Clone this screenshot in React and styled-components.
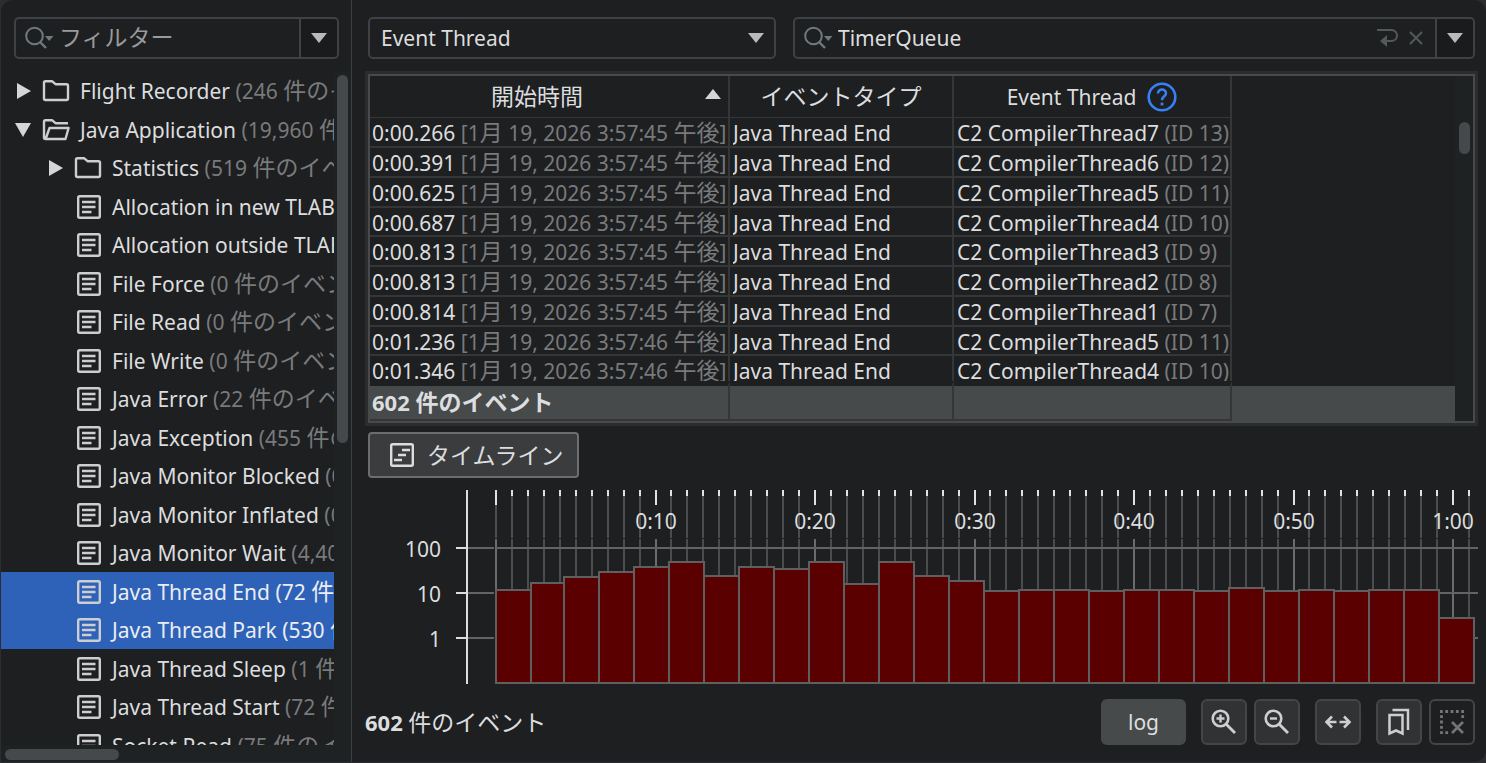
import React, { useState } from "react";
import styled, { createGlobalStyle, css } from "styled-components";

const GlobalStyle = createGlobalStyle`
  body {
    margin: 0;
    background-color: #2b2d30;
    color: #dcdddf;
    font-family: "Noto Sans", "Noto Sans CJK JP", sans-serif;
    font-size: 21px;
  }

  * {
    box-sizing: border-box;
  }

  button,
  input,
  select {
    font: inherit;
    color: inherit;
  }
`;

const Window = styled.div`
  display: flex;
  height: 100vh;
  padding: 0 0 1px 1px;
`;

const Ja = styled.span`
  font-size: 23px;
  line-height: 1;
`;

const Muted = styled.span`
  color: #797a7b;
`;

/* sidebar */

const Sidebar = styled.aside`
  flex: 0 0 351px;
  display: flex;
  flex-direction: column;
  min-width: 0;
  padding-top: 17px;
  border-right: 1px solid #3c3e41;
  border-radius: 12px 0 0 0;
  background-color: #1e1f21;
`;

const Field = styled.div`
  flex: 1;
  display: flex;
  align-items: center;
  min-width: 0;
  height: 42px;
  padding-left: 9px;
  border: 2px solid #404144;
  border-radius: 5px;
`;

const FilterField = styled(Field)`
  flex: none;
  margin: 0 12px 13px 13px;
`;

const FieldInput = styled.input`
  flex: 1;
  min-width: 0;
  height: 100%;
  margin-left: 5px;
  padding: 0;
  border: none;
  outline: none;
  background: none;

  &::placeholder {
    color: #999a9c;
    font-size: 23px;
    opacity: 1;
  }
`;

const ArrowButton = styled.button`
  display: flex;
  align-items: center;
  justify-content: center;
  width: 38px;
  height: 38px;
  padding: 0;
  border: none;
  border-left: 2px solid #404144;
  border-radius: 0 4px 4px 0;
  background-color: #1a1b1d;
`;

const FieldActions = styled.div`
  display: flex;
  align-items: center;
  gap: 8px;
  padding-right: 11px;
`;

const GhostButton = styled.button`
  display: flex;
  padding: 0;
  border: none;
  background: none;
`;

const TreeArea = styled.div`
  flex: 1;
  display: flex;
  min-height: 0;
`;

const Tree = styled.ul`
  flex: 1;
  min-width: 0;
  margin: 0;
  padding: 0;
  overflow: hidden;
  list-style: none;
`;

const TreeRow = styled.li`
  display: flex;
  align-items: center;
  height: 38px;
  padding-left: ${(props) => (props.$level === 0 ? "13px" : "45px")};
  white-space: nowrap;

  &:nth-child(even) {
    height: 39px;
  }

  svg {
    flex: none;
  }

  ${(props) =>
    props.$selected &&
    css`
      background-color: #2e62b8;
      color: #ebedf1;

      ${Muted} {
        color: #ebedf1;
      }
    `}
`;

const Twisty = styled.span`
  flex: none;
  display: flex;
  width: 28px;
`;

const RowLabel = styled.span`
  margin-left: 10px;
`;

const VerticalTrack = styled.div`
  flex: none;
  width: ${(props) => props.$width};
  padding: ${(props) => props.$padding};
  background-color: #1f2223;
`;

const HorizontalTrack = styled.div`
  height: 17px;
  padding: 4px 4px 2px;
  background-color: #1f2223;
`;

const Thumb = styled.div`
  width: ${(props) => props.$width};
  height: ${(props) => props.$height};
  border-radius: 6px;
  background-color: #46494c;
`;

/* main area */

const Main = styled.main`
  flex: 1;
  display: flex;
  flex-direction: column;
  min-width: 0;
  padding: 17px 8px 0 13px;
  border-radius: 0 12px 12px 0;
  background-color: #1e1f21;
`;

const SearchBar = styled.div`
  display: flex;
  gap: 17px;
  margin: 0 3px 12px 3px;
`;

const SelectBox = styled.div`
  flex: 0 0 408px;
  display: grid;
  align-items: center;

  > * {
    grid-area: 1 / 1;
  }

  > svg {
    justify-self: end;
    margin-right: 12px;
    pointer-events: none;
  }
`;

const Select = styled.select`
  height: 42px;
  padding: 0 11px;
  border: 2px solid #404144;
  border-radius: 5px;
  background: #1e1f21;
  appearance: none;
`;

const TableFrame = styled.div`
  padding: 3px;
  background-color: #2a2c2e;
`;

const TableArea = styled.div`
  display: flex;
  border: 2px solid #484a4c;
  background-color: #1e1f21;
`;

const Table = styled.table`
  flex: 1;
  table-layout: fixed;
  border-collapse: separate;
  border-spacing: 0;
  white-space: nowrap;
`;

const HeadCell = styled.th`
  height: 42px;
  padding: 0;
  border: solid #343638;
  border-width: 0 2px 1px 0;
  font-weight: 400;
`;

const HeadContent = styled.div`
  display: flex;
  align-items: center;
  justify-content: center;
  gap: 11px;
`;

const HeadTitle = styled.span`
  flex: ${(props) => (props.$grow ? 1 : "none")};
  padding-left: ${(props) => (props.$grow ? "10px" : 0)};
`;

const SortMark = styled.span`
  display: flex;
  align-self: flex-start;
  padding: 6px 7px 0 0;
`;

const CellContent = styled.div`
  height: 28px;
  line-height: 30px;
  overflow: hidden;
`;

const Cell = styled.td`
  padding: 0 0 0 3px;
  border: solid #343638;
  border-width: 0 2px 2px 0;

  &:first-child {
    padding-left: 2px;
  }
`;

const BodyRow = styled.tr`
  &:nth-child(4n) ${CellContent} {
    height: 27px;
  }

  &:last-child ${CellContent} {
    height: 25px;
  }

  &:last-child ${Cell} {
    border-bottom: none;
  }
`;

const FootCell = styled.td`
  height: 40px;
  padding: 0 0 2px 2px;
  border: solid #343638;
  border-width: 5px 2px 2px 0;
  border-top-color: #1e1f21;
  background-color: #464a4a;
  font-size: 22px;
  font-weight: 700;
  line-height: 30px;
`;

const FillerCell = styled.td`
  padding: 0;
  border-top: ${(props) => (props.$foot ? "5px solid #1e1f21" : "none")};
  background-color: ${(props) => (props.$foot ? "#464a4a" : "transparent")};
`;

const TimelineButton = styled.button`
  align-self: flex-start;
  display: flex;
  align-items: center;
  gap: 13px;
  height: 46px;
  margin: 6px 0 12px 3px;
  padding: 0 14px 0 20px;
  border: 2px solid #6b6d6f;
  border-radius: 4px;
  background-color: #3a3c3e;
`;

const Chart = styled.svg`
  display: block;
  width: 100%;
  height: auto;
`;

const Footer = styled.footer`
  display: flex;
  align-items: center;
  margin: 14px 3px 0 0;
`;

const Total = styled.span`
  flex: 1;

  b {
    font-size: 22px;
  }
`;

const ToolButton = styled.button`
  display: flex;
  align-items: center;
  justify-content: center;
  width: ${(props) => (props.$wide ? "85px" : "46px")};
  height: 46px;
  margin-left: ${(props) => (props.$joined ? "7px" : "15px")};
  padding: 0;
  border: 2px solid ${(props) => (props.$wide ? "#464a4a" : "#434547")};
  border-radius: 6px;
  background-color: ${(props) =>
    props.$wide ? "#464a4a" : props.disabled ? "#1e1f21" : "#303234"};
`;

/* icons */

const DownArrow = () => (
  <svg width="16" height="10" viewBox="0 0 16 10">
    <path d="M0 0H16L8 10Z" fill="#b9babc" />
  </svg>
);

const SearchIcon = () => (
  <svg width="29" height="24" viewBox="0 0 29 24" fill="none">
    <circle cx="9.5" cy="10" r="8.3" stroke="#6e7a80" strokeWidth="2" />
    <path d="M15 16L21 22" stroke="#6e7a80" strokeWidth="2.4" />
    <path d="M20 10H28.5L24.2 15Z" fill="#6e7a80" />
  </svg>
);

const FolderIcon = () => (
  <svg width="28" height="24" viewBox="0 0 28 24" fill="none">
    <path
      d="M3.5 2.2H10L13.5 5.2H24.500Q26 5.200 26 6.700V19.500Q26 21 24.500 21H3.500Q2 21 2 19.500V3.700Q2 2.200 3.500 2.200Z"
      stroke="#cdcecf"
      strokeWidth="2.4"
      strokeLinejoin="round"
    />
  </svg>
);

const OpenFolderIcon = () => (
  <svg width="28" height="24" viewBox="0 0 28 24" fill="none">
    <path
      d="M26 5.2H13.500L10 2.200H3.500Q2 2.200 2 3.700V19.500Q2 21 3.500 21H23.500L26.600 10H7.500L4 20"
      stroke="#cdcecf"
      strokeWidth="2.4"
      strokeLinejoin="round"
    />
  </svg>
);

const EventIcon = () => (
  <svg width="28" height="24" viewBox="-3 0 28 24" fill="none" stroke="#cdcecf">
    <rect x="1.2" y="1.2" width="21.6" height="21.6" rx="1.5" strokeWidth="2.4" />
    <path d="M5 7H18.5M5 12H18.5M5 17H14.5" strokeWidth="2.3" />
  </svg>
);

const TimelineIcon = () => (
  <svg width="24" height="24" viewBox="0 0 24 24" fill="none" stroke="#dcdddf">
    <rect x="1.2" y="1.2" width="21.6" height="21.6" rx="1.5" strokeWidth="2.4" />
    <path d="M12 7H20M8 12H16M4 17H12" strokeWidth="2.3" />
  </svg>
);

const HelpIcon = () => (
  <svg width="30" height="30" viewBox="0 0 30 30" fill="none" stroke="#3880f5">
    <circle cx="15" cy="15" r="13.3" strokeWidth="2.6" />
    <path d="M11 11.5C11 6.2 19 6.3 19 11.3C19 14.2 15 14.5 15 18.3" strokeWidth="2.5" />
    <path d="M15 20.6V23.4" strokeWidth="2.8" />
  </svg>
);

const ReturnIcon = () => (
  <svg width="24" height="22" viewBox="0 0 24 22" fill="none">
    <path d="M1 3H15C23 3 23 14 15 14H9" stroke="#51595b" strokeWidth="2" />
    <path d="M11 8V20L4 14Z" fill="#51595b" />
  </svg>
);

const ClearIcon = () => (
  <svg width="16" height="16" viewBox="0 0 16 16">
    <path d="M2 2L14 14M14 2L2 14" stroke="#51595b" strokeWidth="2" />
  </svg>
);

const ZoomIcon = ({ plus }) => (
  <svg width="26" height="26" viewBox="0 0 26 26" fill="none" stroke="#cdcecf">
    <circle cx="9.5" cy="9.5" r="7.8" strokeWidth="2.6" />
    <path d="M15 15L24 24" strokeWidth="2.8" />
    <path d={plus ? "M5.5 9.5H13.5M9.5 5.5V13.5" : "M6 9.5H13"} strokeWidth="2.4" />
  </svg>
);

const FitIcon = () => (
  <svg width="28" height="16" viewBox="0 0 28 16" fill="none" stroke="#cdcecf" strokeWidth="2.6">
    <path d="M8 2.5L2.500 8L8 13.500M20 2.500L25.500 8L20 13.500M3 8H12.500M15.500 8H25" />
  </svg>
);

const BookmarkIcon = () => (
  <svg width="24" height="28" viewBox="0 0 24 28" fill="none" stroke="#cdcecf" strokeWidth="2.5">
    <path d="M2.5 7H15.5V25.5L9 22.5L2.5 25.5Z" />
    <path d="M5.500 2H21V22" />
  </svg>
);

const DeselectIcon = () => (
  <svg width="26" height="26" viewBox="0 0 26 26" fill="none" stroke="#747577">
    <path
      d="M1 2.500H25M2.500 6.300V25M6.300 23.700H9.100M23.700 6.300V9.100"
      strokeWidth="2.8"
      strokeDasharray="2.8 2.5"
    />
    <path d="M13 13L24 24M24 13L13 24" strokeWidth="2.6" />
  </svg>
);

const Expander = ({ open }) => (
  <svg width="18" height="16" viewBox="0 0 18 16">
    <path d={open ? "M1 1H17L9 15Z" : "M3 0V16L17 8Z"} fill="#d5d6d7" />
  </svg>
);

/* data */

const treeItems = [
  { name: "Flight Recorder", count: "246", level: 0, folder: true },
  { name: "Java Application", count: "19,960", level: 0, folder: true, open: true },
  { name: "Statistics", count: "519", level: 1, folder: true },
  { name: "Allocation in new TLAB", count: "6,120", level: 1 },
  { name: "Allocation outside TLAB", count: "1,043", level: 1 },
  { name: "File Force", count: "0", level: 1 },
  { name: "File Read", count: "0", level: 1 },
  { name: "File Write", count: "0", level: 1 },
  { name: "Java Error", count: "22", level: 1 },
  { name: "Java Exception", count: "455", level: 1 },
  { name: "Java Monitor Blocked", count: "0", level: 1 },
  { name: "Java Monitor Inflated", count: "0", level: 1 },
  { name: "Java Monitor Wait", count: "4,401", level: 1 },
  { name: "Java Thread End", count: "72", level: 1, selected: true },
  { name: "Java Thread Park", count: "530", level: 1, selected: true },
  { name: "Java Thread Sleep", count: "1", level: 1 },
  { name: "Java Thread Start", count: "72", level: 1 },
  { name: "Socket Read", count: "75", level: 1 },
];

const events = [
  { start: "0:00.266", time: "3:57:45", thread: "C2 CompilerThread7", id: 13 },
  { start: "0:00.391", time: "3:57:45", thread: "C2 CompilerThread6", id: 12 },
  { start: "0:00.625", time: "3:57:45", thread: "C2 CompilerThread5", id: 11 },
  { start: "0:00.687", time: "3:57:45", thread: "C2 CompilerThread4", id: 10 },
  { start: "0:00.813", time: "3:57:45", thread: "C2 CompilerThread3", id: 9 },
  { start: "0:00.813", time: "3:57:45", thread: "C2 CompilerThread2", id: 8 },
  { start: "0:00.814", time: "3:57:45", thread: "C2 CompilerThread1", id: 7 },
  { start: "0:01.236", time: "3:57:46", thread: "C2 CompilerThread5", id: 11 },
  { start: "0:01.346", time: "3:57:46", thread: "C2 CompilerThread4", id: 10 },
];

const barHeights = [
  94, 101, 107, 112, 117, 122, 108, 117, 115, 122, 100, 122, 108, 103, 93, 94,
  94, 93, 94, 94, 93, 96, 93, 94, 93, 94, 94, 66,
];

const timeLabels = ["", "0:10", "0:20", "0:30", "0:40", "0:50", "1:00"];

const levels = [
  { label: "100", y: 58 },
  { label: "10", y: 103 },
  { label: "1", y: 148 },
];

const chartLeft = 130;
// the second bar is two units narrower than the others
const barX = (i) => chartLeft + i * 35 - (i > 1 ? 2 : 0);
const tickX = (i) => Math.round(chartLeft + i * 15.95);

const EventChart = () => (
  <Chart viewBox="-1 0 1113 195" role="img" aria-label="タイムライン">
    {Array.from({ length: 62 }, (_, i) => {
      const major = i % 10 === 0;
      const x = tickX(i);
      return (
        <g key={i}>
          {(!major || i === 0) && <path d={`M${x} 6V48`} stroke="#4b4c4e" strokeWidth="2" />}
          <path d={`M${x} 49V194`} stroke={major ? "#6a6b6c" : "#4b4c4e"} strokeWidth="2" />
          <path d={`M${x} 0V${major ? 15 : 6}`} stroke="#e0e1e2" strokeWidth="2" />
        </g>
      );
    })}
    {levels.map(({ label, y }) => (
      <g key={label}>
        <path d={`M102 ${y}H128M130 ${y}H1113`} stroke="#626364" strokeWidth="2" />
        <path d={`M90 ${y}H101`} stroke="#dcdddf" strokeWidth="2" />
        <text x="75" y={y + 9} textAnchor="end" fontSize="21" fill="#dcdddf">
          {label}
        </text>
      </g>
    ))}
    <path d="M101 0V194" stroke="#dcdddf" strokeWidth="2" />
    {barHeights.map((h, i) => (
      <rect
        key={i}
        x={barX(i)}
        y={194 - h}
        width={barX(i + 1) - barX(i)}
        height={h - 1}
        fill="#5a0000"
        stroke="#5e5f60"
        strokeWidth="2"
      />
    ))}
    {timeLabels.map((label, i) => (
      <text key={i} x={tickX(i * 10)} y="39" textAnchor="middle" fontSize="21" fill="#dcdddf">
        {label}
      </text>
    ))}
  </Chart>
);

const App = () => {
  const [filter, setFilter] = useState("");
  const [search, setSearch] = useState("TimerQueue");

  return (
    <>
      <GlobalStyle />
      <Window>
        <Sidebar>
          <FilterField>
            <SearchIcon />
            <FieldInput
              aria-label="フィルター"
              placeholder="フィルター"
              value={filter}
              onChange={(e) => setFilter(e.target.value)}
            />
            <ArrowButton aria-label="フィルター">
              <DownArrow />
            </ArrowButton>
          </FilterField>
          <TreeArea>
            <Tree>
              {treeItems.map((item) => (
                <TreeRow key={item.name} $level={item.level} $selected={item.selected}>
                  <Twisty>{item.folder && <Expander open={item.open} />}</Twisty>
                  {item.folder ? item.open ? <OpenFolderIcon /> : <FolderIcon /> : <EventIcon />}
                  <RowLabel>
                    {item.name}{" "}
                    <Muted>
                      ({item.count} <Ja>件のイベント</Ja>)
                    </Muted>
                  </RowLabel>
                </TreeRow>
              ))}
            </Tree>
            <VerticalTrack $width="17px" $padding="3px 3px 0">
              <Thumb $width="11px" $height="368px" />
            </VerticalTrack>
          </TreeArea>
          <HorizontalTrack>
            <Thumb $width="114px" $height="11px" />
          </HorizontalTrack>
        </Sidebar>

        <Main>
          <SearchBar>
            <SelectBox>
              <Select aria-label="Event Thread" defaultValue="thread">
                <option value="thread">Event Thread</option>
              </Select>
              <DownArrow />
            </SelectBox>
            <Field>
              <SearchIcon />
              <FieldInput
                aria-label="Event Thread"
                value={search}
                onChange={(e) => setSearch(e.target.value)}
              />
              <FieldActions>
                <GhostButton aria-label="Enter">
                  <ReturnIcon />
                </GhostButton>
                <GhostButton aria-label="Clear" onClick={() => setSearch("")}>
                  <ClearIcon />
                </GhostButton>
              </FieldActions>
              <ArrowButton aria-label="TimerQueue">
                <DownArrow />
              </ArrowButton>
            </Field>
          </SearchBar>

          <TableFrame>
            <TableArea>
              <Table>
                <colgroup>
                  <col style={{ width: 360 }} />
                  <col style={{ width: 224 }} />
                  <col style={{ width: 278 }} />
                  <col />
                </colgroup>
                <thead>
                  <tr>
                    <HeadCell>
                      <HeadContent>
                        <HeadTitle $grow>
                          <Ja>開始時間</Ja>
                        </HeadTitle>
                        <SortMark>
                          <svg width="16" height="10" viewBox="0 0 16 10">
                            <path d="M0 10H16L8 0Z" fill="#d5d6d7" />
                          </svg>
                        </SortMark>
                      </HeadContent>
                    </HeadCell>
                    <HeadCell>
                      <Ja>イベントタイプ</Ja>
                    </HeadCell>
                    <HeadCell>
                      <HeadContent>
                        Event Thread <HelpIcon />
                      </HeadContent>
                    </HeadCell>
                    <FillerCell />
                  </tr>
                </thead>
                <tbody>
                  {events.map((event, i) => (
                    <BodyRow key={i}>
                      <Cell>
                        <CellContent>
                          {event.start}{" "}
                          <Muted>
                            [1<Ja>月</Ja> 19, 2026 {event.time} <Ja>午後</Ja>]
                          </Muted>
                        </CellContent>
                      </Cell>
                      <Cell>
                        <CellContent>Java Thread End</CellContent>
                      </Cell>
                      <Cell>
                        <CellContent>
                          {event.thread} <Muted>(ID {event.id})</Muted>
                        </CellContent>
                      </Cell>
                      <FillerCell />
                    </BodyRow>
                  ))}
                </tbody>
                <tfoot>
                  <tr>
                    <FootCell>
                      602 <Ja>件のイベント</Ja>
                    </FootCell>
                    <FootCell />
                    <FootCell />
                    <FillerCell $foot />
                  </tr>
                </tfoot>
              </Table>
              <VerticalTrack $width="18px" $padding="46px 4px 0">
                <Thumb $width="11px" $height="32px" />
              </VerticalTrack>
            </TableArea>
          </TableFrame>

          <TimelineButton>
            <TimelineIcon />
            <Ja>タイムライン</Ja>
          </TimelineButton>

          <EventChart />

          <Footer>
            <Total>
              <b>602</b> <Ja>件のイベント</Ja>
            </Total>
            <ToolButton $wide>log</ToolButton>
            <ToolButton aria-label="Zoom in">
              <ZoomIcon plus />
            </ToolButton>
            <ToolButton aria-label="Zoom out" $joined>
              <ZoomIcon />
            </ToolButton>
            <ToolButton aria-label="Fit">
              <FitIcon />
            </ToolButton>
            <ToolButton aria-label="Bookmarks">
              <BookmarkIcon />
            </ToolButton>
            <ToolButton aria-label="Deselect" $joined disabled>
              <DeselectIcon />
            </ToolButton>
          </Footer>
        </Main>
      </Window>
    </>
  );
};

export default App;
